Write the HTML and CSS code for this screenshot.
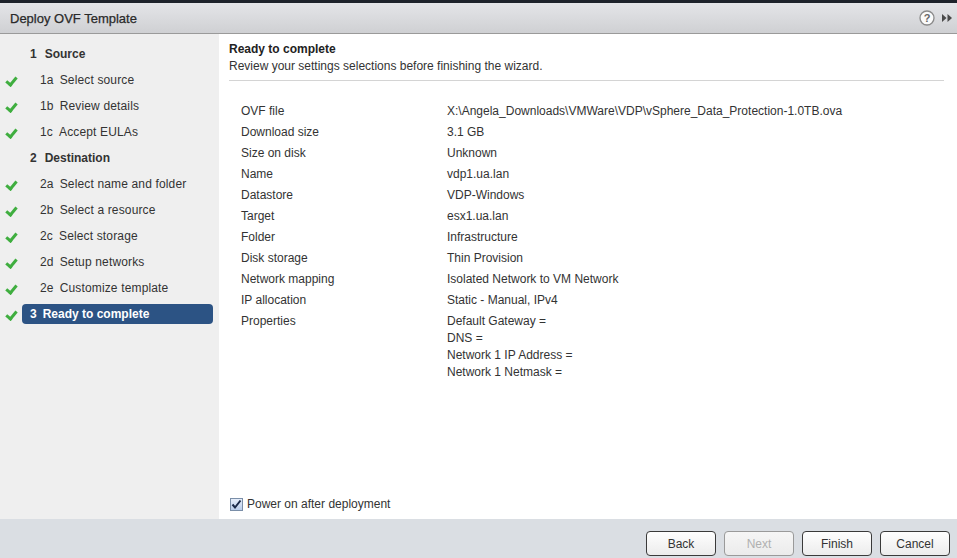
FILE: index.html
```html
<!DOCTYPE html>
<html lang="en">
<head>
    <meta charset="UTF-8">
    <title>Deploy OVF Template</title>
    <link rel="stylesheet" href="styles.css">
</head>
<body>
    <div class="backdrop"></div>
    <div class="dialog">
        <header class="titlebar">
            <h1>Deploy OVF Template</h1>
            <div class="title-tools">
                <svg class="help" width="16" height="16" viewBox="0 0 16 16">
                    <circle cx="8" cy="8" r="7" fill="#fafafa" stroke="#8a8a8a" stroke-width="1.3"/>
                    <text x="8" y="12" text-anchor="middle" font-family="Liberation Sans, Arial, sans-serif" font-size="11" font-weight="bold" fill="#666">?</text>
                </svg>
                <svg class="expand" width="12" height="10" viewBox="0 0 12 10">
                    <path d="M1 1 L5.5 5 L1 9 Z M6.5 1 L11 5 L6.5 9 Z" fill="#4a4a4a"/>
                </svg>
            </div>
        </header>

        <div class="body">
            <nav class="steps">
                <div class="step head"><span class="num">1</span>Source</div>
                <div class="step done"><span class="num">1a</span>Select source</div>
                <div class="step done"><span class="num">1b</span>Review details</div>
                <div class="step done"><span class="num">1c</span>Accept EULAs</div>
                <div class="step head"><span class="num">2</span>Destination</div>
                <div class="step done"><span class="num">2a</span>Select name and folder</div>
                <div class="step done"><span class="num">2b</span>Select a resource</div>
                <div class="step done"><span class="num">2c</span>Select storage</div>
                <div class="step done"><span class="num">2d</span>Setup networks</div>
                <div class="step done"><span class="num">2e</span>Customize template</div>
                <div class="step done current"><span class="label"><span class="num">3</span>Ready to complete</span></div>
            </nav>

            <main class="content">
                <h2>Ready to complete</h2>
                <p class="subtitle">Review your settings selections before finishing the wizard.</p>

                <table class="summary">
                    <tr><td>OVF file</td><td>X:\Angela_Downloads\VMWare\VDP\vSphere_Data_Protection-1.0TB.ova</td></tr>
                    <tr><td>Download size</td><td>3.1 GB</td></tr>
                    <tr><td>Size on disk</td><td>Unknown</td></tr>
                    <tr><td>Name</td><td>vdp1.ua.lan</td></tr>
                    <tr><td>Datastore</td><td>VDP-Windows</td></tr>
                    <tr><td>Target</td><td>esx1.ua.lan</td></tr>
                    <tr><td>Folder</td><td>Infrastructure</td></tr>
                    <tr><td>Disk storage</td><td>Thin Provision</td></tr>
                    <tr><td>Network mapping</td><td>Isolated Network to VM Network</td></tr>
                    <tr><td>IP allocation</td><td>Static - Manual, IPv4</td></tr>
                    <tr class="multi"><td>Properties</td><td>Default Gateway =<br>DNS =<br>Network 1 IP Address =<br>Network 1 Netmask =</td></tr>
                </table>

                <label class="power">
                    <span class="box">
                        <svg width="13" height="13" viewBox="0 0 13 13">
                            <path d="M2.5 6.5 L5 9.5 L10.5 2.5" fill="none" stroke="#1a2a4a" stroke-width="2"/>
                        </svg>
                    </span>
                    Power on after deployment
                </label>
            </main>
        </div>

        <footer class="buttons">
            <button class="btn">Back</button>
            <button class="btn" disabled>Next</button>
            <button class="btn">Finish</button>
            <button class="btn">Cancel</button>
        </footer>
    </div>
</body>
</html>
```

FILE: styles.css
```css
html, body {
    margin: 0;
    height: 100%;
}
body {
    font-family: "Liberation Sans", Arial, sans-serif;
    font-size: 12px;
    color: #333;
    background-color: #2b2f36;
    display: flex;
    flex-direction: column;
    overflow: hidden;
}
.backdrop {
    height: 3px;
    background-color: #1e232b;
}
.dialog {
    flex: 1;
    display: flex;
    flex-direction: column;
    min-height: 0;
}
.titlebar {
    height: 30px;
    display: flex;
    align-items: center;
    justify-content: space-between;
    padding: 0 4px 0 10px;
    background: linear-gradient(#e4e5e8, #cfd0d3);
    border-bottom: 1px solid #9a9a9a;
}
.titlebar h1 {
    margin: 0;
    font-size: 13px;
    font-weight: normal;
    color: #2a2a2a;
    -webkit-text-stroke: 0.25px #2a2a2a;
}
.title-tools {
    display: flex;
    align-items: center;
    gap: 6px;
}
.body {
    flex: 1;
    display: flex;
    min-height: 0;
}
.steps {
    width: 219px;
    background-color: #efefef;
    padding-top: 7px;
    letter-spacing: 0.15px;
}
.step {
    height: 26px;
    display: flex;
    align-items: center;
    padding-left: 40px;
    position: relative;
    color: #333;
}
.step .num {
    margin-right: 6px;
}
.step.head {
    padding-left: 30px;
    font-weight: bold;
    letter-spacing: 0;
}
.step.head .num {
    margin-right: 8px;
}
.step.done::before {
    content: "";
    position: absolute;
    left: 8px;
    top: 8px;
    width: 4px;
    height: 8px;
    border: solid #3fae3f;
    border-width: 0 3px 3px 0;
    transform: rotate(40deg);
}
.step.current {
    padding-left: 22px;
    letter-spacing: 0;
}
.step.current .label {
    flex: 0 0 191px;
    height: 20px;
    box-sizing: border-box;
    display: flex;
    align-items: center;
    padding-left: 8px;
    background-color: #2c5384;
    color: #fff;
    font-weight: bold;
    border-radius: 4px;
}
.content {
    flex: 1;
    background-color: #fff;
    padding: 7px 13px 0 10px;
    display: flex;
    flex-direction: column;
}
.content h2 {
    margin: 0;
    font-size: 12px;
    font-weight: bold;
    color: #222;
    line-height: 16px;
}
.subtitle {
    margin: 2px 0 0;
    line-height: 15px;
    padding-bottom: 6px;
    border-bottom: 1px solid #d4d4d4;
}
.summary {
    margin: 20px 0 0 12px;
    border-collapse: collapse;
}
.summary td {
    padding: 0;
    height: 21px;
    vertical-align: middle;
    line-height: 17px;
}
.summary td:first-child {
    width: 206px;
}
.summary tr.multi td {
    vertical-align: top;
    padding-top: 2px;
}
.power {
    margin-top: auto;
    margin-bottom: 8px;
    display: flex;
    align-items: center;
    gap: 4px;
    padding-left: 1px;
}
.power .box {
    width: 13px;
    height: 13px;
    box-sizing: border-box;
    border: 1px solid #7a8ea8;
    background: linear-gradient(#e6eefb, #b9cdec);
    display: flex;
}
.power .box svg {
    margin: -1px;
}
.buttons {
    height: 37px;
    background-color: #dadee3;
    display: flex;
    justify-content: flex-end;
    align-items: flex-end;
    gap: 8px;
    padding: 0 7px 2px 0;
}
.btn {
    width: 70px;
    height: 25px;
    font-family: inherit;
    font-size: 12px;
    color: #333;
    background: linear-gradient(#fefefe, #ececec);
    border: 1px solid #3a3a3a;
    border-radius: 4px;
    padding: 0;
}
.btn:disabled {
    color: #b0b0b0;
    border-color: #9a9a9a;
    background: linear-gradient(#f6f6f6, #ebebeb);
}
```
